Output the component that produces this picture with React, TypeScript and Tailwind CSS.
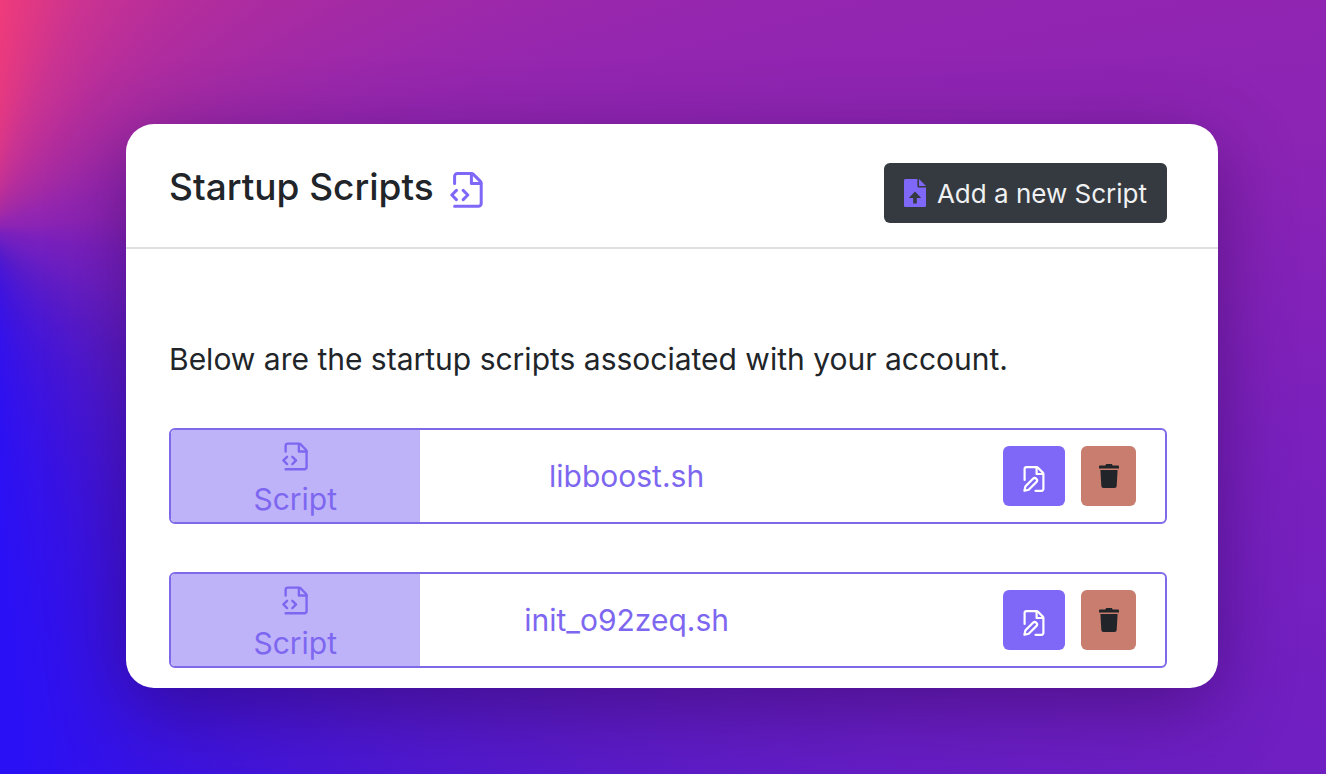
import React from "react";

const scripts = ["libboost.sh", "init_o92zeq.sh"];

function CodeFileIcon({ className }: { className: string }) {
  return (
    <svg viewBox="0 0 33 36" fill="none" stroke="currentColor" strokeWidth="3" strokeLinejoin="round" strokeLinecap="round" className={className} aria-hidden="true">
      <path d="M4.6 11.6V4.4a2.8 2.8 0 0 1 2.8-2.8H21.400a2.800 2.800 0 0 1 2 .8l7 7a2.800 2.800 0 0 1 .8 2v20a2.8 2.8 0 0 1-2.8 2.800H4.600" />
      <path d="M21.400 2v9.600H31" />
      <path d="M6.400 18.400 1.800 23l4.600 4.600M13.200 18.400l4.600 4.600-4.600 4.600" />
    </svg>
  );
}

function UploadFileIcon({ className }: { className: string }) {
  return (
    <svg viewBox="0 0 22 28" fill="currentColor" className={className} aria-hidden="true">
      <path
        fillRule="evenodd"
        d="M1.6 0H13.400v7c0 .9.600 1.600 1.600 1.600H22v17.800c0 .9-.7 1.600-1.600 1.600H1.600C.7 28 0 27.300 0 26.400V1.600C0 .7.7 0 1.600 0ZM11 12.600 4.800 18.900h4.400v5.500h3.600v-5.500h4.400Z"
      />
      <path d="M15 0 22 7H15Z" />
    </svg>
  );
}

function EditFileIcon({ className }: { className: string }) {
  return (
    <svg viewBox="0 0 22 26" fill="none" stroke="currentColor" strokeWidth="2.200" strokeLinejoin="round" strokeLinecap="round" className={className} aria-hidden="true">
      <path d="M1.600 14V3a1.800 1.800 0 0 1 1.800-1.800H13.600a2 2 0 0 1 1.400.6l4.800 4.800a2 2 0 0 1 .6 1.400V23a1.800 1.800 0 0 1-1.800 1.800H12.500" />
      <path d="M13.600 1.600v6.400h6.400" />
      <path d="M1.400 24.800 2.400 20.400 10 12.800a2.300 2.300 0 0 1 3.300 3.300L5.700 23.700Z" />
    </svg>
  );
}

function TrashIcon({ className }: { className: string }) {
  return (
    <svg viewBox="0 0 20 24" fill="currentColor" className={className} aria-hidden="true">
      <path d="M1 1.500h5.300L7.200 0h5.600l.9 1.500H19a1 1 0 0 1 1 1v2H0v-2a1 1 0 0 1 1-1Z" />
      <path d="M1.400 6h17.200l-.9 16a2.200 2.200 0 0 1-2.200 2h-11a2.200 2.200 0 0 1-2.200-2Z" />
    </svg>
  );
}

function ScriptRow({ name }: { name: string }) {
  return (
    <li className="flex h-24 overflow-hidden rounded-md border-2 border-[#8069e8]">
      <div className="flex w-1/4 flex-col items-center bg-[#beb3f9] pt-3 text-[#7e67f0]">
        <CodeFileIcon className="h-[29px] w-[26px]" />
        <span className="mt-2 text-[30px] leading-10">Script</span>
      </div>
      <div className="flex flex-1 items-center">
        <span className="w-5/9 text-center text-[30px] leading-10 text-[#7e67f0]">{name}</span>
        <div className="flex flex-1 justify-end gap-4 pr-[29px]">
          <button type="button" aria-label={`Edit ${name}`} className="flex h-15 w-[62px] items-center justify-center rounded-md bg-[#7f67f7] pt-1.5 text-white">
            <EditFileIcon className="h-[26px] w-[22px]" />
          </button>
          <button type="button" aria-label={`Delete ${name}`} className="flex h-15 w-[55px] items-center justify-center rounded-md bg-[#c87d6f] text-[#212529]">
            <TrashIcon className="h-6 w-5" />
          </button>
        </div>
      </div>
    </li>
  );
}

export default function App() {
  return (
    <div className="min-h-screen bg-[conic-gradient(from_0deg_at_-2%_29.5%,#f23b78_0deg,#f03b7a_6deg,#ca3391_26deg,#b42d9c_43deg,#a32aa5_60deg,#9426b0_75deg,#8c24b4_86deg,#7a20bd_99deg,#6f1fc2_112deg,#5a1bc8_130deg,#4014dc_155deg,#2a10f5_175deg,#2a10f5_181deg,#f23b78_360deg)] pt-31 pr-27 pb-[86px] pl-[126px] font-[Inter,sans-serif] text-[#212529]">
      <main className="overflow-hidden rounded-[28px] bg-white shadow-[0_20px_76px_rgba(40,0,70,0.45)]">
        <header className="flex h-[125px] items-start justify-between border-b-2 border-[#dfdfdf] pt-[39px] pr-[51px] pl-[43px]">
          <h1 className="flex items-center gap-4 text-[37px] leading-12 font-medium">
            Startup Scripts
            <CodeFileIcon className="mt-1.5 h-9 w-[33px] text-[#7f67f7]" />
          </h1>
          <button type="button" className="flex h-15 items-center gap-[11px] rounded-md bg-[#343a40] px-5 text-[26px] text-[#f0f1f2]">
            <UploadFileIcon className="h-7 w-[22px] text-[#7f67f7]" />
            Add a new Script
          </button>
        </header>
        <section className="pt-[86px] pr-[51px] pb-5 pl-[43px]">
          <p className="text-[30px] leading-12">Below are the startup scripts associated with your account.</p>
          <ul className="mt-[45px] flex flex-col gap-12">
            {scripts.map((name) => (
              <ScriptRow key={name} name={name} />
            ))}
          </ul>
        </section>
      </main>
    </div>
  );
}
